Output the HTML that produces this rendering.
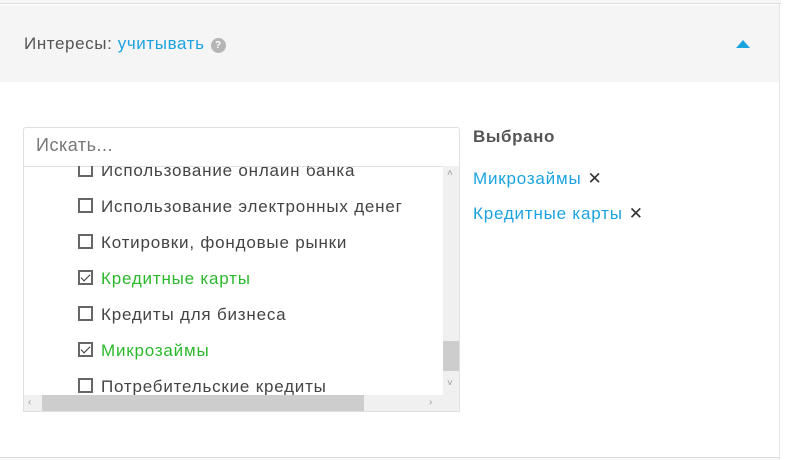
<!DOCTYPE html>
<html><head><meta charset="utf-8"><style>
*{margin:0;padding:0;box-sizing:border-box}
body{width:786px;height:460px;background:#fff;font-family:"Liberation Sans","DejaVu Sans",sans-serif;position:relative;overflow:hidden}
.topline{position:absolute;left:0;top:0;width:781px;height:4px;border-bottom:1px solid #dcdcdc;background:#f7f7f7}
.rb{position:absolute;left:779px;top:4px;width:1px;height:456px;background:#e4e4e4}
.hdr{position:absolute;left:0;top:5px;width:779px;height:77px;background:#f5f5f5}
.ht{position:absolute;left:24px;top:34px;font-size:17px;letter-spacing:0.6px;color:#555}
.ht a{color:#1ba3e0}
.q{display:inline-block;width:15px;height:15px;border-radius:50%;background:#b5b5b5;color:#fff;font-size:10px;text-align:center;line-height:15px;font-weight:bold;vertical-align:1px;margin-left:6px;letter-spacing:0}
.tri{position:absolute;left:736px;top:40px;width:0;height:0;border-left:7px solid transparent;border-right:7px solid transparent;border-bottom:8px solid #1ba3e0}
.bot{position:absolute;left:0;top:457px;width:779px;height:3px;border-top:1px solid #dcdcdc;background:#f7f7f7}
.search{position:absolute;left:23px;top:127px;width:437px;height:40px;border:1px solid #e0e0e0;border-radius:3px 3px 0 0;font-size:18px;letter-spacing:0.5px;color:#777;padding:7px 12px;background:#fff}
.list{position:absolute;left:23px;top:166px;width:437px;height:246px;border:1px solid #e0e0e0;border-top:none;overflow:hidden}
.item{position:absolute;left:54px;font-size:17px;letter-spacing:0.8px;color:#444;white-space:nowrap;line-height:20px}
.item.g{color:#2cb82c}
.cb{display:inline-block;width:15px;height:15px;border:2px solid #666;vertical-align:-1px;margin-right:8px;position:relative}
.cb.c::after{content:"";position:absolute;left:3px;top:0px;width:4px;height:8px;border:solid #333;border-width:0 1.5px 1.5px 0;transform:rotate(45deg)}
.vs{position:absolute;left:419px;top:0;width:17px;height:229px;background:#f0f0f0}
.vt{position:absolute;left:419px;top:175px;width:17px;height:30px;background:#cdcdcd}
.hs{position:absolute;left:0;top:229px;width:436px;height:17px;background:#f0f0f0}
.htb{position:absolute;left:18px;top:229px;width:322px;height:17px;background:#cdcdcd}
.ar{position:absolute;font-size:10px;color:#999}
.sel{position:absolute;left:473px;font-size:17px;letter-spacing:0.8px}
.sel b{color:#555;letter-spacing:0.6px}
.sel a{color:#1ba3e0}
.sel span{color:#333;margin-left:6px}
</style></head><body>
<div class="topline"></div>
<div class="hdr"></div>
<div class="rb"></div>
<div class="ht">Интересы: <a>учитывать</a><span class="q">?</span></div>
<div class="tri"></div>
<div class="search">Искать...</div>
<div class="list">
<div class="item" style="top:-5px"><span class="cb"></span>Использование онлайн банка</div>
<div class="item" style="top:31px"><span class="cb"></span>Использование электронных денег</div>
<div class="item" style="top:67px"><span class="cb"></span>Котировки, фондовые рынки</div>
<div class="item g" style="top:103px"><span class="cb c"></span>Кредитные карты</div>
<div class="item" style="top:139px"><span class="cb"></span>Кредиты для бизнеса</div>
<div class="item g" style="top:175px"><span class="cb c"></span>Микрозаймы</div>
<div class="item" style="top:211px"><span class="cb"></span>Потребительские кредиты</div>
<div class="vs"></div><div class="vt"></div>
<div class="hs"></div><div class="htb"></div>
<div class="ar" style="left:423px;top:2px">˄</div>
<div class="ar" style="left:423px;top:212px">˅</div>
<div class="ar" style="left:4px;top:231px">‹</div>
<div class="ar" style="left:405px;top:231px">›</div>
</div>
<div class="sel" style="top:127px"><b>Выбрано</b></div>
<div class="sel" style="top:169px"><a>Микрозаймы</a><span>✕</span></div>
<div class="sel" style="top:204px"><a>Кредитные карты</a><span>✕</span></div>
<div class="bot"></div>
</body></html>
